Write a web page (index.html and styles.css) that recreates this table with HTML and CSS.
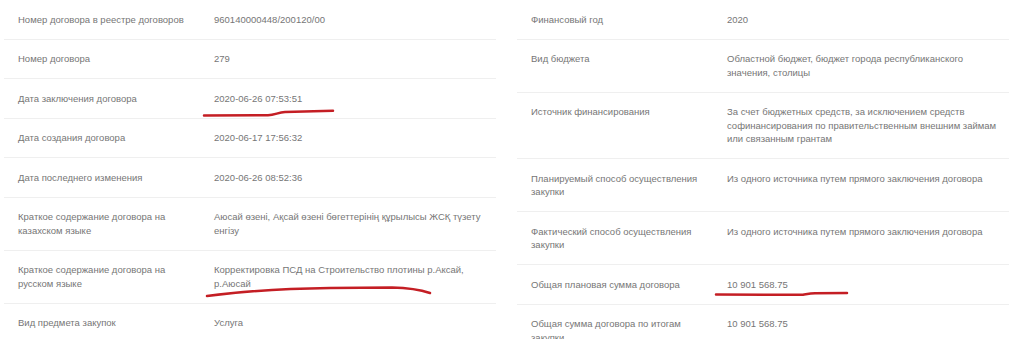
FILE: index.html
```html
<!DOCTYPE html>
<html lang="ru">
<head>
<meta charset="utf-8">
<link rel="stylesheet" href="styles.css">
</head>
<body>
<div class="page">
  <div class="table">
    <div class="row"><div class="label">Номер договора в реестре договоров</div><div class="value">960140000448/200120/00</div></div>
    <div class="row"><div class="label">Номер договора</div><div class="value">279</div></div>
    <div class="row"><div class="label">Дата заключения договора</div><div class="value">2020-06-26 07:53:51</div></div>
    <div class="row"><div class="label">Дата создания договора</div><div class="value">2020-06-17 17:56:32</div></div>
    <div class="row"><div class="label">Дата последнего изменения</div><div class="value">2020-06-26 08:52:36</div></div>
    <div class="row"><div class="label">Краткое содержание договора на казахском языке</div><div class="value">Аюсай өзені, Ақсай өзені бөгеттерінің құрылысы ЖСҚ түзету енгізу</div></div>
    <div class="row"><div class="label">Краткое содержание договора на русском языке</div><div class="value">Корректировка ПСД на Строительство плотины р.Аксай, р.Аюсай</div></div>
    <div class="row"><div class="label">Вид предмета закупок</div><div class="value">Услуга</div></div>
  </div>
  <div class="table">
    <div class="row"><div class="label">Финансовый год</div><div class="value">2020</div></div>
    <div class="row"><div class="label">Вид бюджета</div><div class="value">Областной бюджет, бюджет города республиканского значения, столицы</div></div>
    <div class="row"><div class="label">Источник финансирования</div><div class="value">За счет бюджетных средств, за исключением средств софинансирования по правительственным внешним займам или связанным грантам</div></div>
    <div class="row"><div class="label">Планируемый способ осуществления закупки</div><div class="value">Из одного источника путем прямого заключения договора</div></div>
    <div class="row"><div class="label">Фактический способ осуществления закупки</div><div class="value">Из одного источника путем прямого заключения договора</div></div>
    <div class="row"><div class="label">Общая плановая сумма договора</div><div class="value">10 901 568.75</div></div>
    <div class="row"><div class="label">Общая сумма договора по итогам закупки</div><div class="value">10 901 568.75</div></div>
  </div>
</div>
<svg class="marks" width="1024" height="339" viewBox="0 0 1024 339">
  <path d="M204 115.5 L268 115.3 C275 115 278 112.5 285 112 L333 110.8" />
  <path d="M207 296 Q260 289 330 288 L392 287.5 Q415 288 430 293" />
  <path d="M716 294.5 L803 294.8 C808 294 810 293.5 815 293.3 L847 293" />
</svg>
</body>
</html>
```
FILE: styles.css
```css
html, body {
  margin: 0;
  padding: 0;
  background: #ffffff;
  height: 339px;
  overflow: hidden;
}
body {
  position: relative;
  font-family: "Liberation Sans", Roboto, Arial, sans-serif;
  font-size: 9.5px;
  color: #767676;
}
.page {
  display: flex;
  gap: 21px;
  padding-left: 4px;
}
.table {
  width: 492px;
  flex: none;
}
.row {
  display: grid;
  grid-template-columns: 210px 1fr;
  border-bottom: 1px solid #efefef;
  padding: 12.5px 0;
  line-height: 13.5px;
}
.label {
  padding-left: 14px;
  padding-right: 20px;
}
.value {
  padding-right: 10px;
}
.marks {
  position: absolute;
  top: 0;
  left: 0;
  pointer-events: none;
}
.marks path {
  fill: none;
  stroke: #c41e24;
  stroke-width: 2.5;
  stroke-linecap: round;
  stroke-linejoin: round;
}
```
